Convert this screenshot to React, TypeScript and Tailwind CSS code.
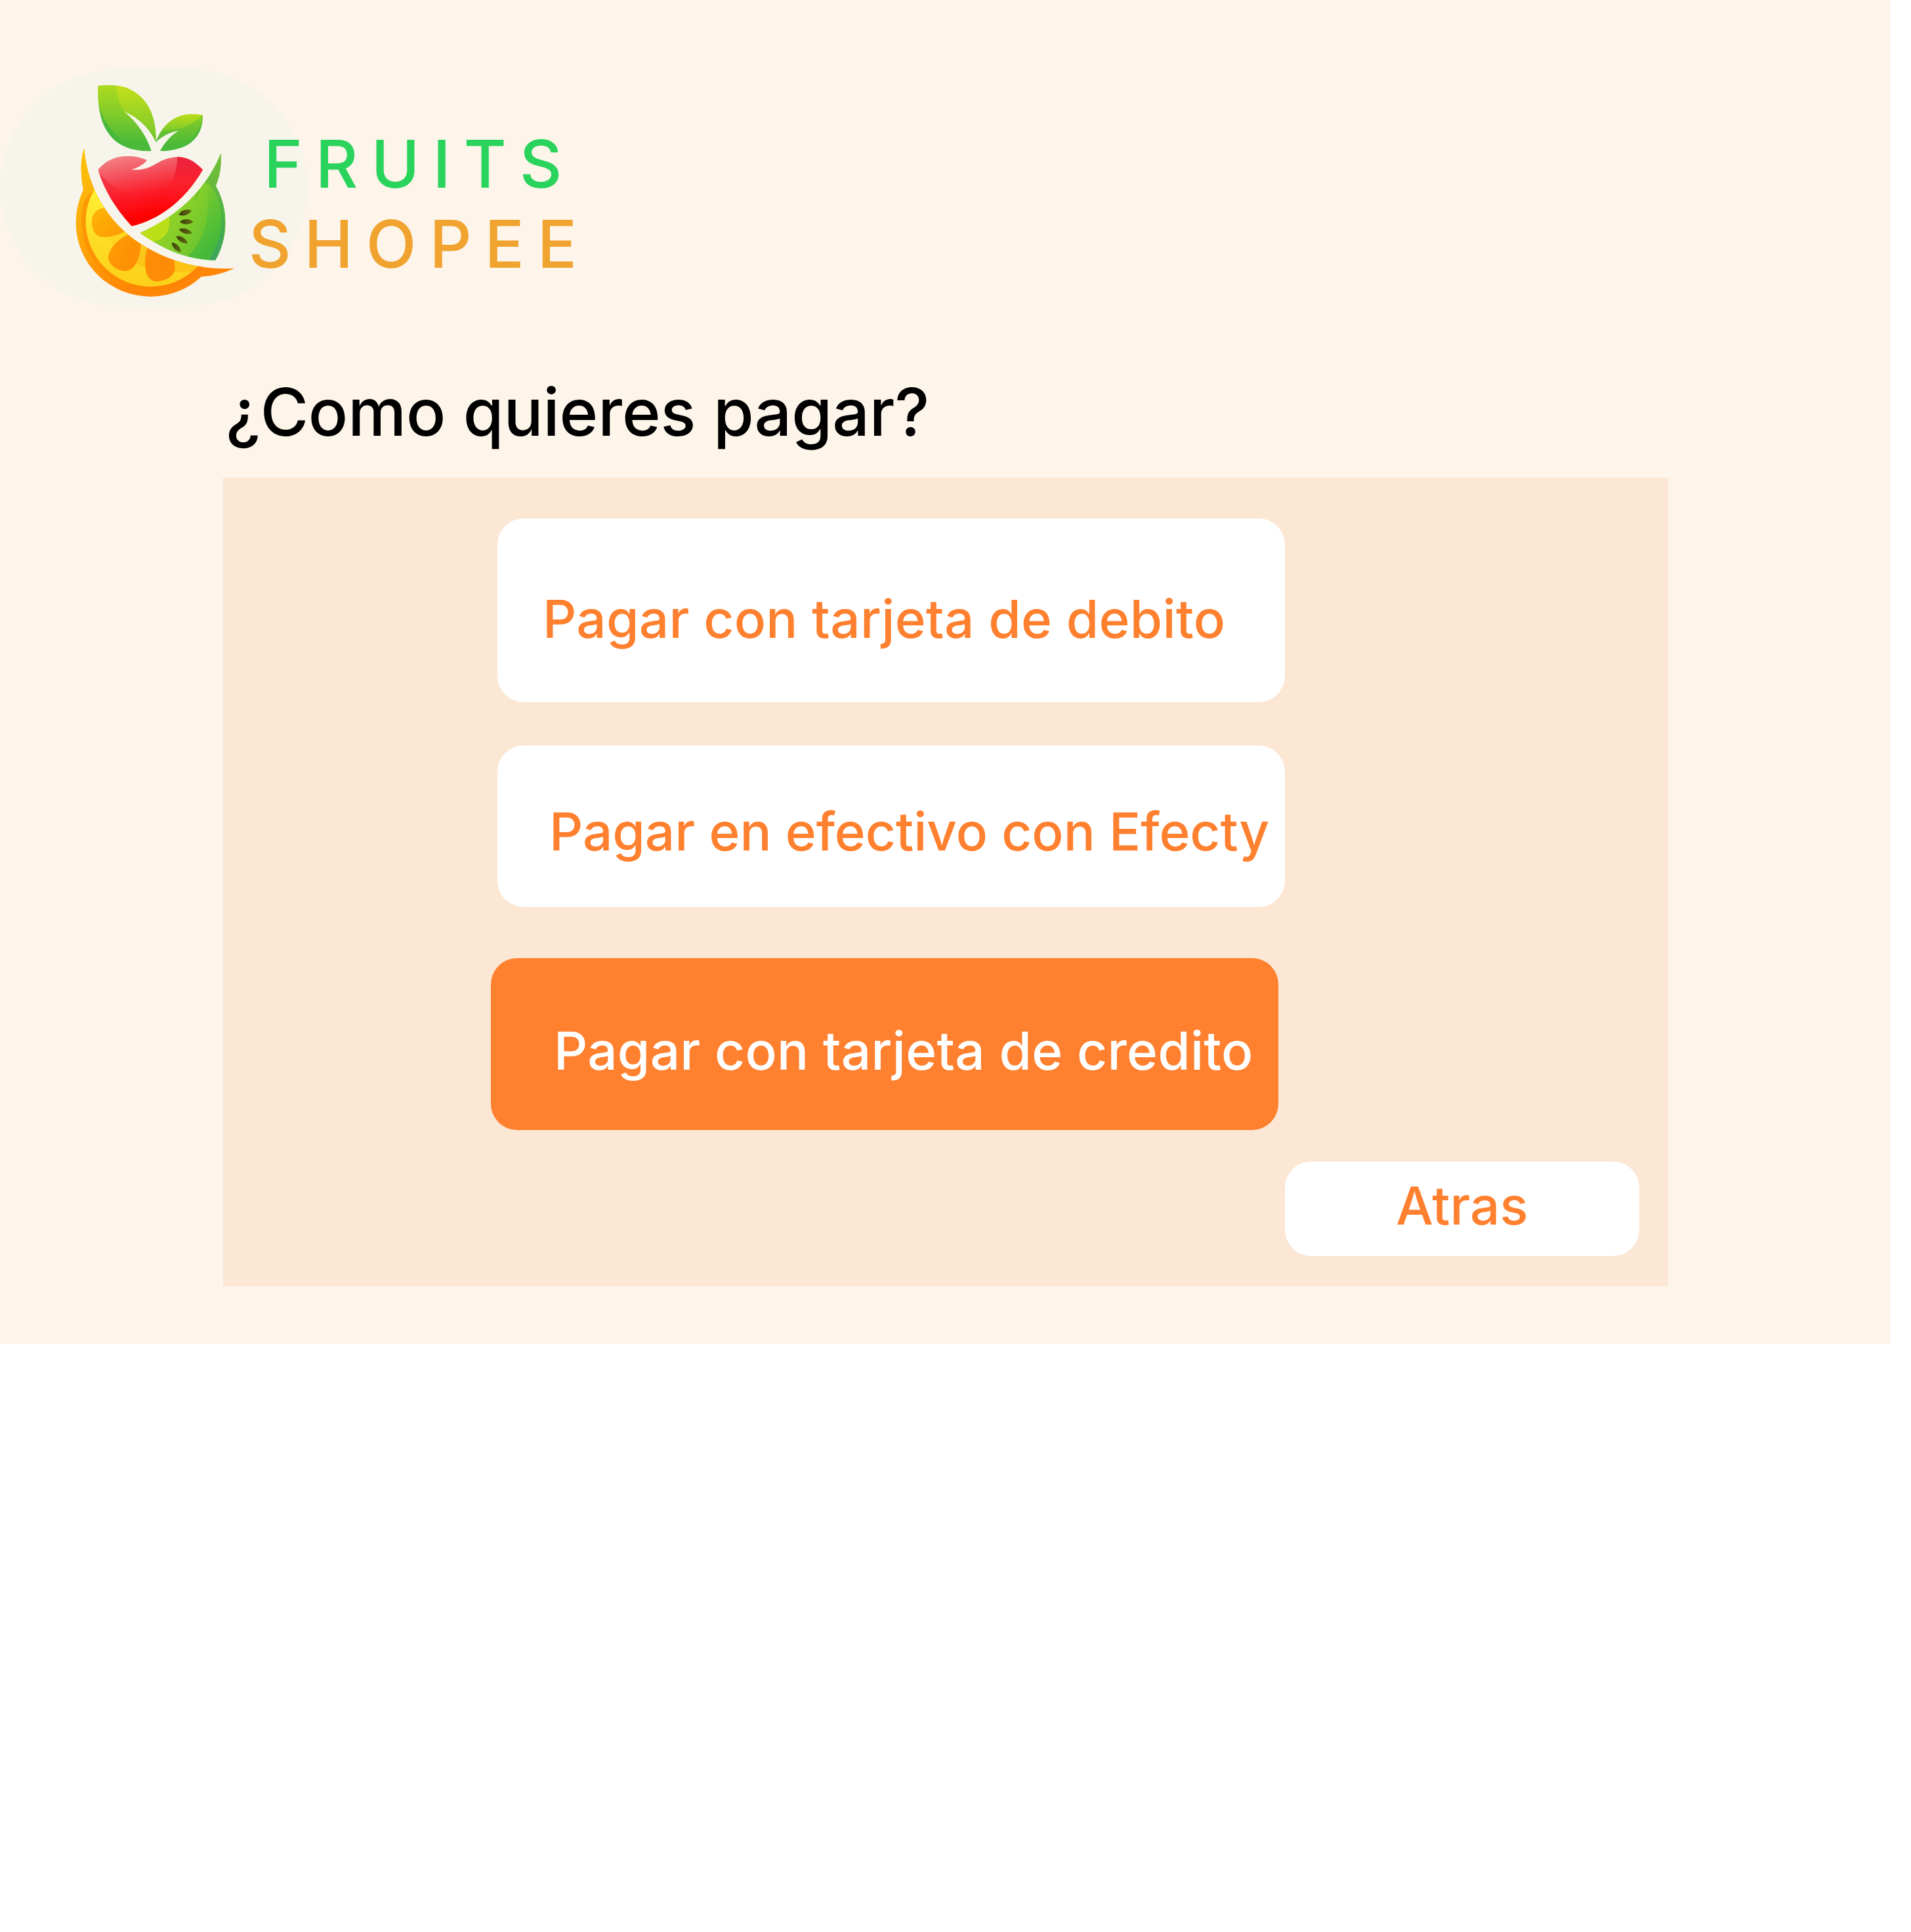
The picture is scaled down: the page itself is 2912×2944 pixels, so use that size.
function FruitLogo() {
  return (
    <svg viewBox="0 0 840 1050" className="ml-[100px] mt-1 h-[350px] w-[280px]" aria-hidden="true">
      <defs>
        <linearGradient id="leaf" x1="0" y1="0" x2="0" y2="1">
          <stop offset="0" stopColor="#b0dc1e" />
          <stop offset="0.45" stopColor="#80cb2a" />
          <stop offset="0.85" stopColor="#4cba38" />
          <stop offset="1" stopColor="#4ab83a" />
        </linearGradient>
        <linearGradient id="leafLight" x1="0" y1="0" x2="0" y2="1">
          <stop offset="0" stopColor="#c6e11a" />
          <stop offset="1" stopColor="#70c52d" />
        </linearGradient>
        <linearGradient id="smallLeaf" x1="0" y1="0" x2="0" y2="1">
          <stop offset="0" stopColor="#c2df18" />
          <stop offset="0.5" stopColor="#76c82c" />
          <stop offset="0.85" stopColor="#4ab93a" />
        </linearGradient>
        <linearGradient id="leafEdge" x1="0" y1="0" x2="0" y2="1">
          <stop offset="0" stopColor="#46b83c" stopOpacity="0" />
          <stop offset="0.55" stopColor="#46b83c" />
          <stop offset="1" stopColor="#4ab93a" />
        </linearGradient>
        <linearGradient id="heart" x1="0.25" y1="0" x2="0.5" y2="0.85">
          <stop offset="0" stopColor="#f28488" />
          <stop offset="0.3" stopColor="#f4535f" />
          <stop offset="0.65" stopColor="#fc1a26" />
          <stop offset="1" stopColor="#fe0000" />
        </linearGradient>
        <linearGradient id="heartSide" x1="0" y1="0" x2="0" y2="1">
          <stop offset="0" stopColor="#e8223c" />
          <stop offset="0.45" stopColor="#fb2230" />
          <stop offset="1" stopColor="#fe0a10" stopOpacity="0" />
        </linearGradient>
        <linearGradient id="heartLower" gradientUnits="userSpaceOnUse" x1="150" y1="480" x2="310" y2="560">
          <stop offset="0" stopColor="#f8182c" stopOpacity="0.6" />
          <stop offset="1" stopColor="#fc1020" stopOpacity="0" />
        </linearGradient>
        <linearGradient id="peel" gradientUnits="userSpaceOnUse" x1="70" y1="400" x2="360" y2="960">
          <stop offset="0" stopColor="#fcc00c" />
          <stop offset="0.5" stopColor="#fea808" />
          <stop offset="1" stopColor="#ff8606" />
        </linearGradient>
        <linearGradient id="peelShade" x1="0" y1="0" x2="1" y2="1">
          <stop offset="0" stopColor="#fca205" />
          <stop offset="1" stopColor="#fd7b02" />
        </linearGradient>
        <linearGradient id="pulp" x1="0" y1="0" x2="0" y2="1">
          <stop offset="0.2" stopColor="#fff334" />
          <stop offset="0.65" stopColor="#fddc24" />
          <stop offset="1" stopColor="#fdd018" />
        </linearGradient>
        <linearGradient id="pulpShade" gradientUnits="userSpaceOnUse" x1="150" y1="720" x2="330" y2="830">
          <stop offset="0" stopColor="#fb8a04" stopOpacity="0" />
          <stop offset="1" stopColor="#fb8a04" stopOpacity="0.24" />
        </linearGradient>
        <linearGradient id="wedge" gradientUnits="userSpaceOnUse" x1="140" y1="620" x2="400" y2="900">
          <stop offset="0" stopColor="#feb305" />
          <stop offset="0.6" stopColor="#fe9604" />
          <stop offset="1" stopColor="#fd8c06" />
        </linearGradient>
        <linearGradient id="kiwi" x1="0.2" y1="0.2" x2="0.8" y2="0.9">
          <stop offset="0" stopColor="#7ac23a" />
          <stop offset="0.35" stopColor="#8fd026" />
          <stop offset="0.7" stopColor="#62c432" />
          <stop offset="1" stopColor="#46b93a" />
        </linearGradient>
        <linearGradient id="kiwiBody" x1="0" y1="0.2" x2="1" y2="0.8">
          <stop offset="0" stopColor="#9ad41f" />
          <stop offset="0.6" stopColor="#88cf28" />
          <stop offset="1" stopColor="#66c332" />
        </linearGradient>
        <linearGradient id="kiwiRim" x1="0" y1="0" x2="0" y2="1">
          <stop offset="0" stopColor="#74c03a" />
          <stop offset="0.3" stopColor="#66ba3c" />
          <stop offset="0.65" stopColor="#43ac52" />
          <stop offset="1" stopColor="#3ea65a" />
        </linearGradient>
        <linearGradient id="seed" x1="0" y1="0" x2="1" y2="0">
          <stop offset="0" stopColor="#3c3f08" />
          <stop offset="1" stopColor="#626b14" />
        </linearGradient>
        <clipPath id="orangeClip">
          <path d="M85 348C66 400 68 470 81 538A342 342 0 0 0 47 690A343 336 0 0 0 390 1026A342 342 0 0 0 620 935C675 931 725 918 772 896C650 905 490 880 345 786C215 705 100 550 85 348Z" />
        </clipPath>
        <clipPath id="kiwiClip">
          <path d="M709 372C713 425 706 475 686 520A342 342 0 0 1 684 860C550 858 440 805 340 735C500 665 640 545 709 372Z" />
        </clipPath>
        <clipPath id="heartClip">
          <path d="M148 446C185 400 235 383 285 383C318 384 345 390 372 402C355 425 330 436 300 446C410 452 405 395 512 387C560 388 595 412 627 446C555 568 450 668 302 704C225 620 175 535 148 446Z" />
        </clipPath>
        <clipPath id="leafClip">
          <path d="M148 62C190 56 250 58 285 74C370 112 415 190 413 320C385 258 335 208 268 180C325 228 368 285 392 361C215 365 140 255 148 62Z" />
        </clipPath>
        <clipPath id="smallLeafClip">
          <path d="M413 320C445 225 520 175 627 196C628 300 560 360 432 361C450 325 480 290 517 267C475 275 440 292 413 320Z" />
        </clipPath>
      </defs>

      <g clipPath="url(#leafClip)">
        <rect x="140" y="50" width="280" height="320" fill="url(#leaf)" />
        <path d="M232 50C232 100 243 142 268 180L420 330V50Z" fill="url(#leafLight)" />
        <path d="M140 90C155 200 205 280 290 330L320 370H140Z" fill="url(#leafEdge)" />
      </g>
      <g clipPath="url(#smallLeafClip)">
        <rect x="410" y="185" width="225" height="180" fill="url(#smallLeaf)" />
        <path d="M635 180C600 235 525 275 410 266V370H635Z" fill="#4ab93a" opacity="0.4" />
        <path d="M635 190C615 260 590 300 535 340L560 370H635Z" fill="#4ab93a" opacity="0.7" />
      </g>

      <g clipPath="url(#heartClip)">
        <rect x="140" y="375" width="495" height="335" fill="url(#heart)" />
        <path d="M510 380C512 440 495 500 455 555L520 640L635 460V380Z" fill="url(#heartSide)" />
        <path d="M140 440C175 500 240 545 330 555L302 710L140 560Z" fill="url(#heartLower)" />
      </g>

      <g clipPath="url(#orangeClip)">
        <rect x="40" y="340" width="740" height="690" fill="url(#peel)" />
        <circle cx="390" cy="680" r="318" fill="url(#peelShade)" />
        <path d="M60 340H145V525L120 545L70 600Z" fill="url(#peel)" />
        <circle cx="389" cy="683" r="297" fill="url(#pulp)" />
        <path d="M176 621C145 622 118 645 120 690C122 740 150 760 195 753C220 750 245 742 268 729L300 700L200 600Z" fill="url(#wedge)" />
        <path d="M284 743C240 765 195 805 195 850C200 885 240 910 275 909C325 905 345 830 343 784L360 750L300 720Z" fill="url(#wedge)" />
        <path d="M374 803C362 840 360 880 368 915C380 950 400 957 418 957C460 955 500 930 500 895L497 866L500 830L385 780Z" fill="url(#wedge)" />
        <path d="M150 600C170 860 380 932 580 912L640 850L350 740Z" fill="url(#pulpShade)" />
      </g>

      <g clipPath="url(#kiwiClip)">
        <rect x="335" y="365" width="400" height="500" fill="url(#kiwi)" />
        <path d="M640 480C665 640 650 750 552 850L330 800V600Z" fill="url(#kiwiBody)" />
        <path d="M590 590C600 540 635 500 652 508C735 600 735 740 650 865H740V365H690Z" fill="url(#kiwiRim)" />
        <path d="M680 510C728 600 733 700 716 780L745 760V540Z" fill="#5fba3e" />
        <path d="M330 735L474 655C482 730 450 770 395 774Z" fill="#bcdf1a" />
      </g>

      <g fill="url(#seed)">
        <path transform="translate(546 642) rotate(-13)" d="M-30 3C-18 -15 12 -17 31 -2C14 15 -16 16 -30 3Z" />
        <path transform="translate(552 684)" d="M-30 0C-15 -16 14 -16 31 0C14 15 -15 15 -30 0Z" />
        <path transform="translate(548 727) rotate(13)" d="M-31 -2C-14 -16 14 -14 31 2C12 15 -16 14 -31 -2Z" />
        <path transform="translate(532 766) rotate(31)" d="M-31 0C-15 -15 13 -15 31 0C13 15 -15 14 -31 0Z" />
        <path transform="translate(506 801) rotate(46)" d="M-30 0C-15 -15 13 -15 30 0C13 14 -15 14 -30 0Z" />
      </g>
    </svg>
  );
}

export default function App() {
  return (
    <div className="h-[2944px] w-[2912px] bg-white font-['Inter',sans-serif] font-medium">
      <main className="flex h-[2048px] w-[2880px] flex-col bg-[#fdf4ea] pt-[106px]">
        <header className="flex h-[360px]">
          <div className="h-[360px] w-[468px] shrink-0 rounded-full bg-[#f7f5eb]">
            <FruitLogo />
          </div>
          <div className="z-10 -ml-[89px] flex flex-col pt-[83px] text-[100px] leading-[122px] tracking-[19.9px]">
            <span className="pl-[23px] text-[#29d35c]">FRUITS</span>
            <span className="text-[#f0a32e]">SHOPEE</span>
          </div>
        </header>

        <h1 className="ml-[344px] mt-[102px] text-[100px] leading-[120px] tracking-[-0.1px] text-black">
          ¿Como quieres pagar?
        </h1>

        <section className="ml-[340px] mt-10 flex h-[1232px] w-[2202px] flex-col bg-[#fbe7d4] pt-[62px] text-[80px] leading-[96px] text-[#ff802e]">
          <button className="ml-[418px] flex h-[280px] w-[1200px] items-start whitespace-nowrap rounded-[40px] bg-white pl-[69px] pt-[105px] tracking-[0.27px]">
            Pagar con tarjeta de debito
          </button>
          <button className="ml-[418px] mt-[66px] flex h-[246px] w-[1200px] items-start whitespace-nowrap rounded-[40px] bg-white pl-[79px] pt-[83px] tracking-[-0.04px]">
            Pagar en efectivo con Efecty
          </button>
          <button className="ml-[408px] mt-[78px] flex h-[262px] w-[1200px] items-start whitespace-nowrap rounded-[40px] bg-[#ff802e] pl-[96px] pt-[93px] tracking-[0.23px] text-white">
            Pagar con tarjeta de credito
          </button>
          <button className="mr-11 mt-12 flex h-36 w-[540px] items-start justify-center self-end rounded-[40px] bg-white pt-[19px]">
            Atras
          </button>
        </section>
      </main>
    </div>
  );
}
